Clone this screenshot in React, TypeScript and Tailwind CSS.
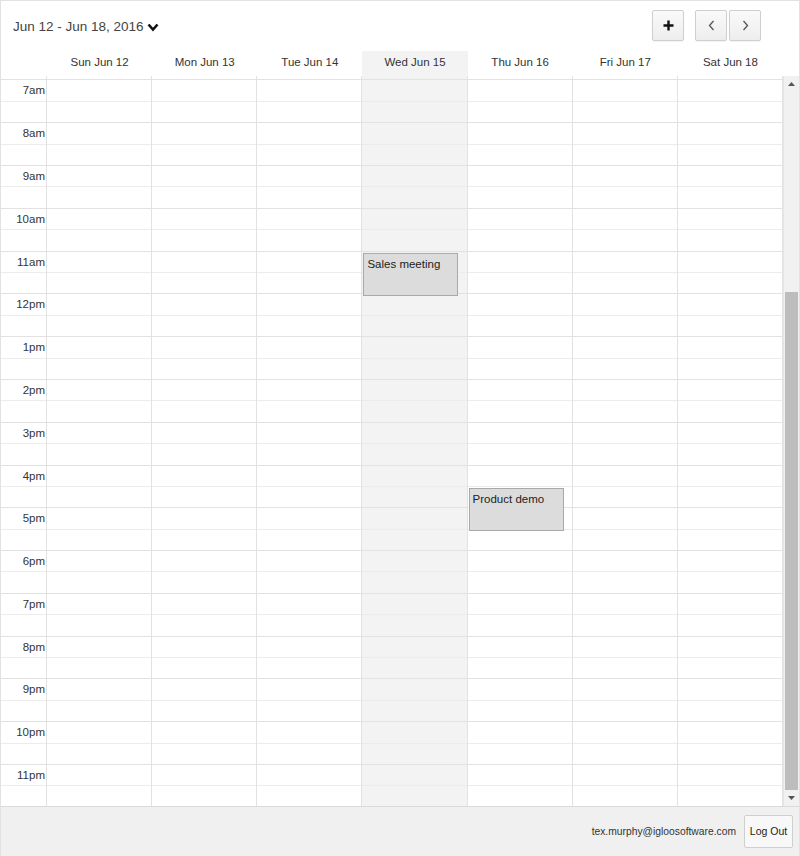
const days = ['Sun Jun 12', 'Mon Jun 13', 'Tue Jun 14', 'Wed Jun 15', 'Thu Jun 16', 'Fri Jun 17', 'Sat Jun 18']

const hours = Array.from({ length: 24 }, (_, h) => {
  if (h === 0) return '12am'
  if (h < 12) return `${h}am`
  if (h === 12) return '12pm'
  return `${h - 12}pm`
})

const HOUR = 42.8

const events = [
  { day: 3, start: 11, end: 12, title: 'Sales meeting' },
  { day: 4, start: 16.5, end: 17.5, title: 'Product demo' },
]

function HourCells({ label }: { label?: string }) {
  return (
    <>
      <div className="h-[21.4px] border-b border-[#ececec] text-right pr-[1px] pt-[3px] text-[11.5px] leading-[14px] text-[#333]">
        {label}
      </div>
      <div className="h-[21.4px] border-b border-[#e2e2e2]" />
    </>
  )
}

function NavButton({ children }: { children: React.ReactNode }) {
  return (
    <button className="w-[32px] h-[31px] flex items-center justify-center rounded-[2px] border border-[#cfcfcf] bg-gradient-to-b from-[#fafafa] to-[#ededed] shadow-[0_1px_1px_rgba(0,0,0,0.05)]">
      {children}
    </button>
  )
}

function Scrollbar() {
  return (
    <div className="w-[16px] flex flex-col bg-[#f1f1f1] border-l border-[#e6e6e6]">
      <div className="h-[16px] flex items-center justify-center">
        <svg width="7" height="4" viewBox="0 0 7 4">
          <polygon points="0,4 3.5,0 7,4" fill="#555" />
        </svg>
      </div>
      <div className="h-[200px]" />
      <div className="flex-1 mx-[1px] bg-[#bdbdbd]" />
      <div className="h-[16px] flex items-center justify-center">
        <svg width="7" height="4" viewBox="0 0 7 4">
          <polygon points="0,0 3.5,4 7,0" fill="#555" />
        </svg>
      </div>
    </div>
  )
}

export default function App() {
  return (
    <div className="w-[800px] h-[856px] flex flex-col border-l border-t border-r border-[#e2e2e2] bg-white font-['Liberation_Sans',Arial,sans-serif] text-[#333]">
      {/* toolbar */}
      <div className="h-[50px] flex items-start justify-between pl-[12px] pr-[38px]">
        <div className="flex items-center gap-[3px] pt-[16px] text-[13.5px] text-[#444]">
          <span>Jun 12 - Jun 18, 2016</span>
          <svg width="12" height="9" viewBox="0 0 12 9">
            <polyline points="1.5,1.5 6,6.5 10.5,1.5" fill="none" stroke="#111" strokeWidth="2.6" />
          </svg>
        </div>
        <div className="flex items-center pt-[9px] gap-[11px]">
          <NavButton>
            <svg width="11" height="11" viewBox="0 0 11 11">
              <path d="M5.5 0.5v10M0.5 5.5h10" stroke="#111" strokeWidth="2.4" />
            </svg>
          </NavButton>
          <div className="flex gap-[2px]">
            <NavButton>
              <svg width="7" height="11" viewBox="0 0 7 11">
                <polyline points="5.5,1 1.5,5.5 5.5,10" fill="none" stroke="#555" strokeWidth="1.3" />
              </svg>
            </NavButton>
            <NavButton>
              <svg width="7" height="11" viewBox="0 0 7 11">
                <polyline points="1.5,1 5.5,5.5 1.5,10" fill="none" stroke="#555" strokeWidth="1.3" />
              </svg>
            </NavButton>
          </div>
        </div>
      </div>

      {/* day headers */}
      <div className="h-[25px] flex pr-[16px] text-[11.5px] text-[#333]">
        <div className="w-[46px]" />
        {days.map((d, i) => (
          <div
            key={d}
            className={`flex-1 flex items-center justify-center pb-[2px] ${i === 3 ? 'bg-[#f3f3f3]' : ''}`}
          >
            {d}
          </div>
        ))}
      </div>

      {/* grid + scrollbar */}
      <div className="h-[730px] flex">
        <div
          className="flex-1 overflow-hidden"
          ref={(el) => {
            if (el) el.scrollTop = 7 * HOUR - 5
          }}
        >
          <div className="flex">
            <div className="w-[46px] border-r border-[#e2e2e2]">
              {hours.map((h) => (
                <HourCells key={h} label={h} />
              ))}
            </div>
            {days.map((d, i) => (
              <div key={d} className={`relative flex-1 border-r border-[#e2e2e2] ${i === 3 ? 'bg-[#f3f3f3]' : ''}`}>
                {hours.map((h) => (
                  <HourCells key={h} />
                ))}
                {events
                  .filter((e) => e.day === i)
                  .map((e) => (
                    <div
                      key={e.title}
                      className="absolute left-[1px] w-[95px] border border-[#a9a9a9] bg-[#dcdcdc] px-[3px] pt-[3px] text-[11.5px] leading-[14px] text-[#222]"
                      style={{ top: e.start * HOUR + 1, height: (e.end - e.start) * HOUR }}
                    >
                      {e.title}
                    </div>
                  ))}
              </div>
            ))}
          </div>
        </div>
        <Scrollbar />
      </div>

      {/* footer */}
      <div className="h-[50px] flex items-center justify-end gap-[8px] pr-[6px] border-t border-[#dadada] bg-[#f0f0f0]">
        <span className="text-[10.3px] text-[#333]">tex.murphy@igloosoftware.com</span>
        <button className="h-[33px] w-[49px] rounded-[2px] border border-[#cfcfcf] bg-[#f8f8f8] text-[10.5px] text-[#222]">
          Log Out
        </button>
      </div>
    </div>
  )
}
